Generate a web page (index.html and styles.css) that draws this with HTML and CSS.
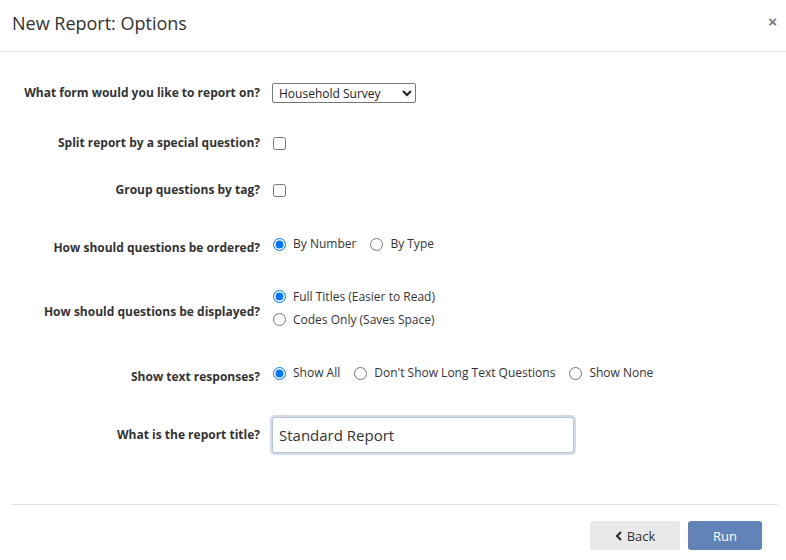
FILE: index.html
```html
<!DOCTYPE html>
<html lang="en">
<head>
<meta charset="utf-8">
<title>New Report: Options</title>
<link rel="stylesheet" href="styles.css">
</head>
<body>
<div class="modal">
  <header class="modal-header">
    <h1 class="modal-title">New Report: Options</h1>
    <button class="close" type="button" aria-label="Close">×</button>
  </header>
  <form class="modal-body">
    <div class="row row-form">
      <label class="label" for="form">What form would you like to report on?</label>
      <div class="control">
        <select id="form" class="select">
          <option>Household Survey</option>
        </select>
      </div>
    </div>
    <div class="row row-split">
      <label class="label" for="split">Split report by a special question?</label>
      <div class="control"><input id="split" type="checkbox" class="check"></div>
    </div>
    <div class="row row-tag">
      <label class="label" for="tag">Group questions by tag?</label>
      <div class="control"><input id="tag" type="checkbox" class="check"></div>
    </div>
    <div class="row row-order">
      <span class="label">How should questions be ordered?</span>
      <div class="control radios inline">
        <label class="opt"><input type="radio" name="order" checked> By Number</label>
        <label class="opt"><input type="radio" name="order"> By Type</label>
      </div>
    </div>
    <div class="row row-display">
      <span class="label">How should questions be displayed?</span>
      <div class="control radios stacked">
        <label class="opt"><input type="radio" name="display" checked> Full Titles (Easier to Read)</label>
        <label class="opt"><input type="radio" name="display"> Codes Only (Saves Space)</label>
      </div>
    </div>
    <div class="row row-text">
      <span class="label">Show text responses?</span>
      <div class="control radios inline">
        <label class="opt"><input type="radio" name="text" checked> Show All</label>
        <label class="opt"><input type="radio" name="text"> Don't Show Long Text Questions</label>
        <label class="opt"><input type="radio" name="text"> Show None</label>
      </div>
    </div>
    <div class="row row-title">
      <label class="label" for="title">What is the report title?</label>
      <div class="control"><input id="title" class="text-input" type="text" value="Standard Report"></div>
    </div>
  </form>
  <footer class="modal-footer">
    <button type="button" class="btn btn-back"><svg class="chev" width="8" height="10" viewBox="0 0 8 10"><path d="M6 1 L2 5 L6 9" fill="none" stroke="#333" stroke-width="2.2"/></svg>Back</button>
    <button type="button" class="btn btn-run">Run</button>
  </footer>
</div>
</body>
</html>
```

FILE: styles.css
```css
* { box-sizing: border-box; }
html, body { margin: 0; padding: 0; background: #fff; }
body {
  font-family: "Open Sans", "Liberation Sans", sans-serif;
  color: #333;
  width: 786px;
  height: 560px;
  overflow: hidden;
}
.modal { display: flex; flex-direction: column; height: 560px; }
.modal-header {
  height: 52px;
  border-bottom: 1px solid #e5e5e5;
  display: flex;
  align-items: center;
  justify-content: space-between;
  padding: 0 9px 6px 12px;
}
.modal-title {
  margin: 0;
  font-size: 18px;
  font-weight: 400;
  color: #333;
}
.close {
  border: 0;
  background: none;
  color: #777;
  font-weight: 700;
  font-size: 15px;
  font-family: "Liberation Sans", sans-serif;
  padding: 0;
  line-height: 1;
  margin-bottom: 2px;
}
.modal-body {
  display: flex;
  flex-direction: column;
  padding-top: 31px;
  height: 452px;
  margin: 0;
}
.row { display: flex; align-items: center; }
.label {
  width: 260px;
  text-align: right;
  font-size: 12px;
  font-weight: 700;
  line-height: 20px;
  padding-right: 0;
  flex: none;
}
.control { margin-left: 12px; display: flex; align-items: center; }
.row-split { margin-top: 30px; }
.row-tag { margin-top: 27px; }
.row-order { margin-top: 34px; }
.row-display { margin-top: 23px; }
.row-text { margin-top: 24px; }
.row-title { margin-top: 26px; }

.select {
  font-family: "Open Sans", sans-serif;
  font-size: 12px;
  height: 20px;
  width: 144px;
  color: #222;
  border: 1px solid #767676;
  border-radius: 2px;
  background: #fff;
  padding: 0 2px;
}
.check { margin: 0 0 0 1px; width: 13px; height: 13px; }

.radios { margin-bottom: 8px; font-size: 12px; }
.radios.inline { flex-direction: row; gap: 13px; height: 20px; }
.radios.stacked { flex-direction: column; align-items: flex-start; }
.radios.stacked .opt { height: 23px; }
.opt { display: flex; align-items: center; gap: 7px; color: #333; line-height: 20px; }
.opt input { margin: 0 0 0 1px; width: 13px; height: 13px; }

.text-input {
  width: 302px;
  height: 36px;
  font-family: "Open Sans", sans-serif;
  font-size: 15px;
  color: #333;
  padding: 0 6px;
  border: 1px solid #b8c3d6;
  border-radius: 3px;
  box-shadow: 0 0 0 2px #d3dbeb;
  outline: none;
}

.modal-footer {
  margin: 0 8px 0 12px;
  border-top: 1px solid #dde2e6;
  display: flex;
  justify-content: flex-end;
  gap: 8px;
  padding: 16px 16px 0 0;
}
.btn {
  height: 29px;
  border: 0;
  border-radius: 3px;
  font-family: "Open Sans", sans-serif;
  font-size: 13px;
  display: flex;
  align-items: center;
  justify-content: center;
  gap: 4px;
}
.btn-back { width: 90px; background: #e9e9e9; color: #333; }
.btn-run { width: 74px; background: #6283b8; color: #fff; }
```
